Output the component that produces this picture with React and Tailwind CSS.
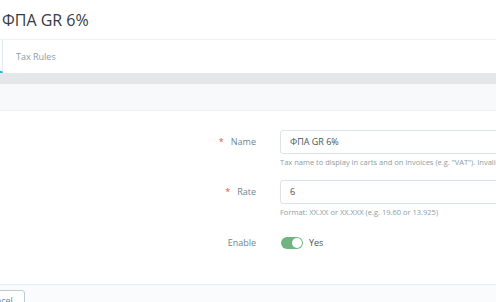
import React from 'react';

const Field = ({ label, required, children, help }) => (
  <div className="flex">
    <div className="w-[256px] shrink-0 flex justify-end items-start pt-[5px] text-[9px] leading-[14px] text-[#6c868e]">
      {required && <span className="text-[#f54c3e] mr-[7px]">*</span>}
      {label}
    </div>
    <div className="ml-[24px] shrink-0">
      {children}
      {help && <p className="mt-[3px] text-[7.5px] leading-[10px] text-[#8a9ea5]">{help}</p>}
    </div>
  </div>
);

const TextInput = ({ value }) => (
  <div className="w-[300px] h-[24px] border border-[#dbe3e6] rounded-[3px] flex items-center px-[9px] text-[9px] text-[#4a5256]">
    {value}
  </div>
);

export default function App() {
  return (
    <div
      className="w-[496px] h-[302px] overflow-hidden bg-white flex flex-col"
      style={{ fontFamily: '"Open Sans", "Noto Sans", sans-serif' }}
    >
      {/* page header */}
      <div className="h-[40px] shrink-0 flex items-center pl-[2px] border-b border-[#eef0f1]">
        <h1 className="text-[16px] text-[#363a41] leading-none">ФПА GR 6%</h1>
      </div>

      {/* tabs */}
      <div className="h-[33px] shrink-0 flex items-stretch bg-white">
        <div className="w-[3px] border-r border-[#dde9ec] border-b-[2px] border-b-[#25b9d7]" />
        <div className="flex items-center pl-[13px] text-[9px] text-[#8a9ea5]">Tax Rules</div>
      </div>

      <div className="h-[11px] shrink-0 bg-[#e6e7e9]" />
      <div className="h-[27px] shrink-0 bg-[#f8f9fa] border-b border-[#eceef0]" />

      {/* form body */}
      <div className="flex-1 bg-white pt-[19px] flex flex-col">
        <Field label="Name" required help={'Tax name to display in carts and on invoices (e.g. "VAT"). Invalid characters: <>;=#{}'}>
          <TextInput value="ФПА GR 6%" />
        </Field>
        <div className="h-[13px]" />
        <Field label="Rate" required help="Format: XX.XX or XX.XXX (e.g. 19.60 or 13.925)">
          <TextInput value="6" />
        </Field>
        <div className="flex mt-[19px] items-center">
          <div className="w-[256px] shrink-0 text-right text-[9px] text-[#6c868e]">Enable</div>
          <div className="ml-[25px] flex items-center gap-[6px]">
            <div className="w-[22px] h-[12px] rounded-full bg-[#70b580] flex items-center justify-end pr-[1px]">
              <div className="w-[10px] h-[10px] rounded-full bg-white" />
            </div>
            <span className="text-[9px] text-[#4a5256]">Yes</span>
          </div>
        </div>
      </div>

      {/* footer */}
      <div className="h-[18px] shrink-0 bg-[#fafbfc] border-t border-[#e9ecee] pt-[5px]">
        <button className="ml-[-27px] h-[20px] px-[11px] border border-[#bbcdd2] rounded-[3px] bg-white text-[9px] text-[#6c868e] leading-none flex items-start pt-[5px]">
          Cancel
        </button>
      </div>
    </div>
  );
}
